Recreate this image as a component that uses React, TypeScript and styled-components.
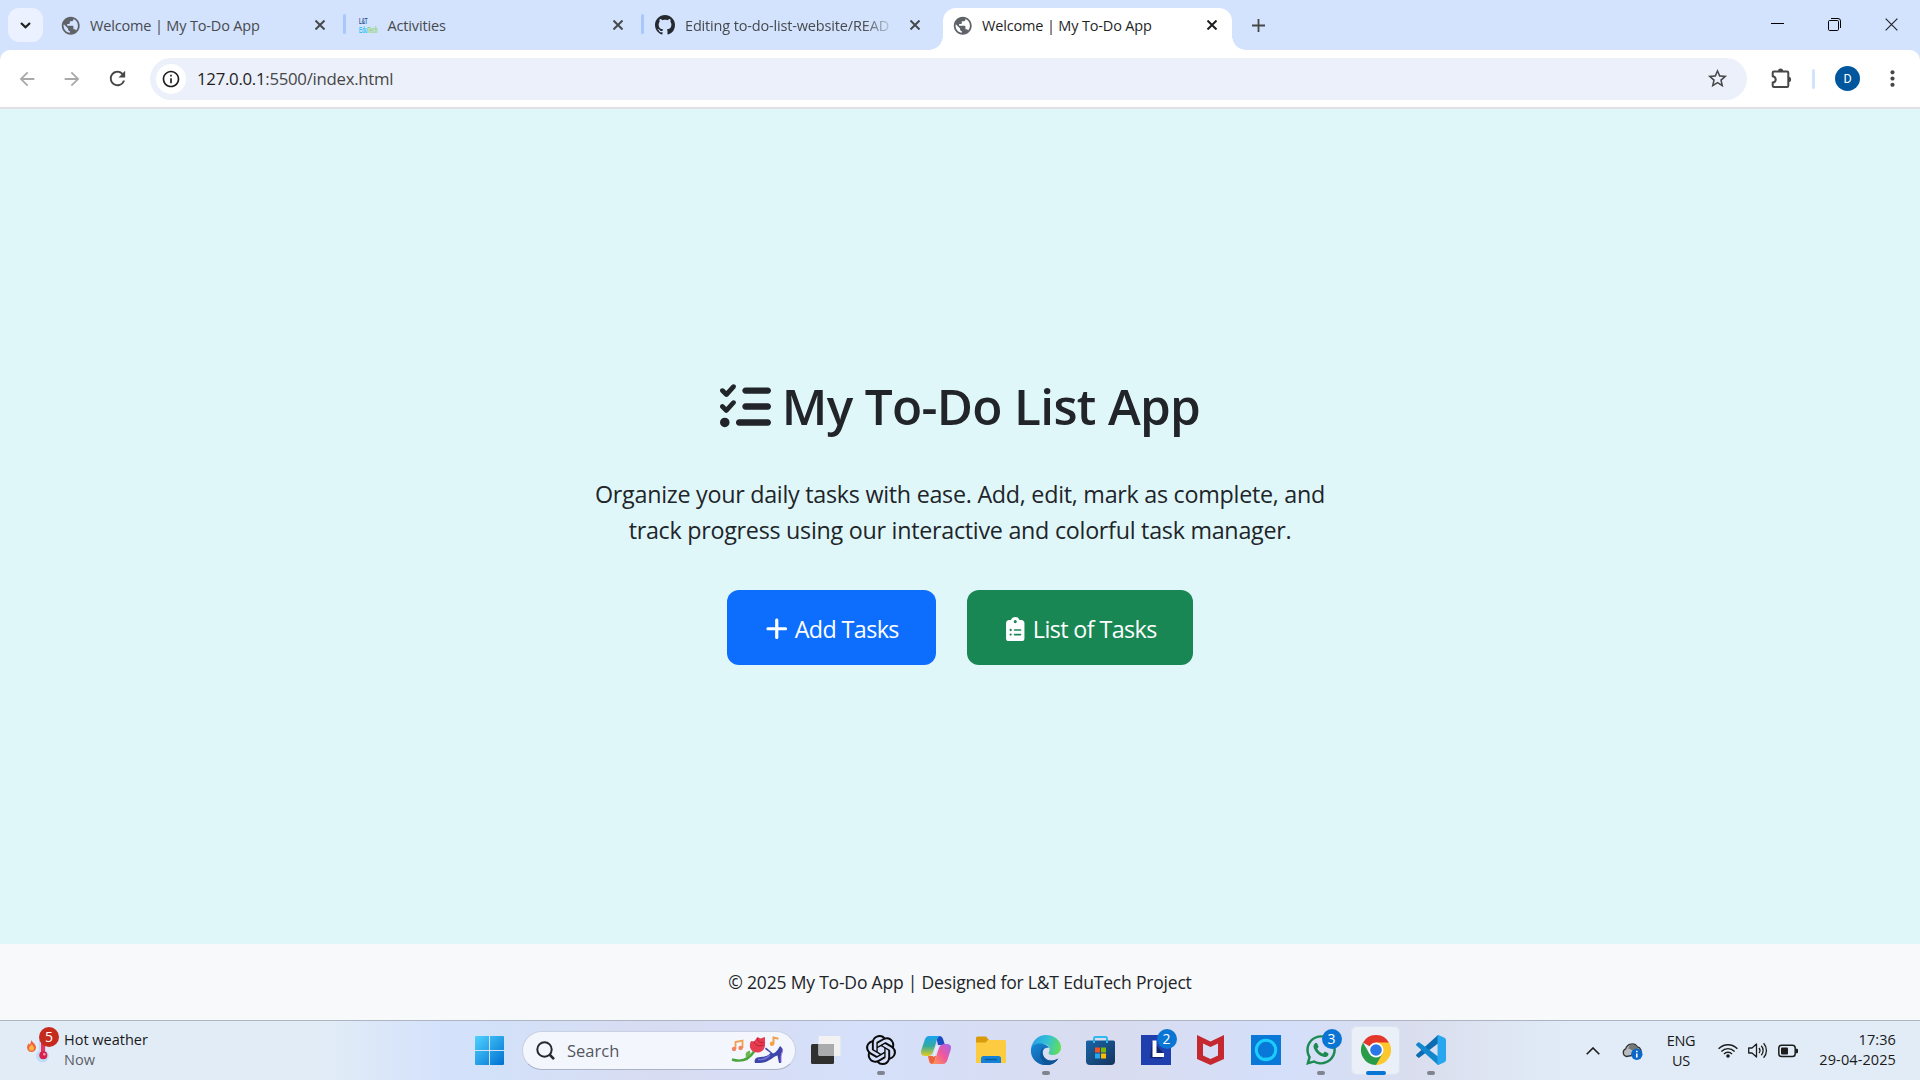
import React from "react";
import styled, { createGlobalStyle } from "styled-components";
import { FaListCheck, FaPlus, FaClipboardList } from "react-icons/fa6";
import { FaWhatsapp } from "react-icons/fa";
import { SiOpenai } from "react-icons/si";
import {
  MdPublic,
  MdArrowBack,
  MdArrowForward,
  MdRefresh,
  MdInfoOutline,
  MdStarOutline,
  MdMoreVert,
} from "react-icons/md";

const GlobalStyle = createGlobalStyle`
  * { box-sizing: border-box; }
  html, body { margin: 0; padding: 0; overflow: hidden; }
  body { font-family: "Open Sans", "Noto Sans", sans-serif; color: #212529; }
  svg { display: block; flex: none; }
`;

const Screen = styled.div`
  width: 1920px;
  height: 1080px;
  display: flex;
  flex-direction: column;
  overflow: hidden;
`;

const Label = styled.span<{ $size: number; $track?: number; $color?: string; $line?: number }>`
  display: block;
  white-space: nowrap;
  font-size: ${(p) => p.$size}px;
  letter-spacing: ${(p) => p.$track ?? 0}px;
  line-height: ${(p) => p.$line ?? 20}px;
  color: ${(p) => p.$color ?? "inherit"};
`;

/* ---------- browser: tab strip ---------- */

const TabStrip = styled.header`
  height: 50px;
  flex: none;
  display: flex;
  background: #d3e2fd;
`;

const TabSearch = styled.button`
  width: 35px;
  height: 34px;
  margin: 8px 4px 0 8px;
  padding: 0;
  border: 0;
  border-radius: 11px;
  background: #ebf1fe;
  display: grid;
  place-items: center;
`;

const Tab = styled.div<{ $active?: boolean; $divider?: boolean }>`
  position: relative;
  width: ${(p) => (p.$active ? 289 : 297.5)}px;
  height: ${(p) => (p.$active ? 42.5 : 50)}px;
  margin: ${(p) => (p.$active ? "7.5px 0 0 3.5px" : "0")};
  padding: ${(p) => (p.$active ? "0 11px 8px 10px" : "0 15.5px 0 14px")};
  border-radius: 13px 13px 0 0;
  background: ${(p) => (p.$active ? "#fff" : "transparent")};
  color: ${(p) => (p.$active ? "#1f1f1f" : "#474a4d")};
  display: flex;
  align-items: center;

  &::after {
    content: "";
    display: ${(p) => (p.$divider ? "block" : "none")};
    position: absolute;
    right: -1.5px;
    top: 14px;
    width: 3px;
    height: 20px;
    border-radius: 2px;
    background: #a8c7fa;
  }
`;

const TabFlare = styled.i<{ $side: "left" | "right" }>`
  position: absolute;
  bottom: 0;
  ${(p) => p.$side}: -14px;
  width: 14px;
  height: 14px;
  background: radial-gradient(
    circle at ${(p) => (p.$side === "left" ? "0 0" : "100% 0")},
    transparent 13.5px,
    #fff 14px
  );
`;

const Favicon = styled.div`
  width: 20px;
  margin: 0 10px 0 -1px;
  display: grid;
  place-items: center;
  height: 20px;
`;

const TabTitle = styled(Label)<{ $fade?: boolean }>`
  flex: 1;
  margin-top: 2px;
  mask-image: ${(p) => (p.$fade ? "linear-gradient(90deg, #000 178px, transparent 211px)" : "none")};
`;

const TabClose = styled.div`
  width: 18px;
  height: 18px;
  margin-left: 9px;
  display: grid;
  place-items: center;
`;

const NewTab = styled.div`
  width: 52px;
  display: grid;
  place-items: center;
`;

const WindowControls = styled.div`
  margin-left: auto;
  padding-right: 22px;
  display: flex;
  align-items: center;
  gap: 44px;
  height: 49px;
`;

/* ---------- browser: toolbar ---------- */

const ToolbarBack = styled.div`
  flex: none;
  background: #d3e2fd;
`;

const Toolbar = styled.div`
  height: 59px;
  background: #fff;
  border-bottom: 2px solid #e1e1e3;
  border-radius: 10px 10px 0 0;
  display: flex;
  align-items: center;
  color: #474747;
`;

const NavButtons = styled.div`
  width: 150px;
  padding-left: 16px;
  display: flex;
  gap: 23px;
  align-items: center;
`;

const Omnibox = styled.div`
  width: 1597px;
  height: 42px;
  border-radius: 21px;
  background: #ecf0fa;
  padding: 0 18px 0 6px;
  display: flex;
  align-items: center;
`;

const SiteInfo = styled.div`
  width: 30px;
  height: 30px;
  border-radius: 50%;
  background: #fff;
  color: #1f1f1f;
  display: grid;
  place-items: center;
  margin-right: 11px;
`;

const Url = styled(Label)`
  flex: 1;
  padding-top: 1px;
  b {
    font-weight: 400;
    color: #1f1f1f;
  }
`;

const ToolbarEnd = styled.div`
  flex: 1;
  padding-left: 24px;
  display: flex;
  align-items: center;
`;

const ToolbarDivider = styled.i`
  width: 3px;
  height: 20px;
  border-radius: 2px;
  background: #d3e2fd;
  margin: 0 20px 0 20px;
`;

const Avatar = styled.div`
  width: 25px;
  height: 25px;
  border-radius: 50%;
  background: #00579d;
  color: #fff;
  font: 12.5px/25px Roboto, sans-serif;
  text-align: center;
  margin-right: 20px;
`;

/* ---------- page ---------- */

const Main = styled.main`
  height: 835px;
  flex: none;
  background: #e0f7fa;
  display: flex;
  flex-direction: column;
  align-items: center;
  padding-top: 267px;
`;

const Title = styled.h1`
  margin: 0;
  height: 60px;
  display: flex;
  align-items: center;
  gap: 11px;
  font-size: 49.5px;
  font-weight: 600;
  letter-spacing: -0.68px;
  line-height: 60px;
  white-space: nowrap;
`;

const Lead = styled.p`
  margin: 40px 0 0;
  text-align: center;
`;

const Actions = styled.div`
  display: flex;
  gap: 31px;
  margin-top: 42px;
`;

const Action = styled.a<{ $color: string; $width: number }>`
  width: ${(p) => p.$width}px;
  height: 75px;
  padding-top: 3px;
  border-radius: 12px;
  background: ${(p) => p.$color};
  color: #fff;
  display: flex;
  align-items: center;
  justify-content: center;
  gap: 5px;
`;

const Footer = styled.footer`
  height: 76px;
  flex: none;
  background: #f8f9fb;
  display: flex;
  justify-content: center;
  align-items: center;
`;

/* ---------- taskbar ---------- */

const Taskbar = styled.div`
  height: 60px;
  flex: none;
  border-top: 1px solid #adb5c1;
  background: linear-gradient(
    90deg,
    #e2ecf6 0,
    #e1ecf7 330px,
    #d3e1fb 450px,
    #d3e1f8 500px,
    #d8dcf2 660px,
    #d5e0fa 860px,
    #d9dcef 1110px,
    #d4dffa 1280px,
    #dadeee 1420px,
    #e1ecf8 1570px,
    #e1ecf7 1920px
  );
  display: flex;
  color: #1a1a1a;
`;

const Weather = styled.div`
  width: 475px;
  padding: 8px 0 0 26px;
  display: flex;
  gap: 5px;
`;

const WeatherText = styled.div`
  padding-top: 1px;
`;

const WeatherIcon = styled.div`
  position: relative;
  width: 33px;
  height: 40px;
`;

const Badge = styled.span<{ $top: number; $right: number; $color: string }>`
  position: absolute;
  top: ${(p) => p.$top}px;
  right: ${(p) => p.$right}px;
  width: 20px;
  height: 20px;
  border-radius: 50%;
  background: ${(p) => p.$color};
  color: #fff;
  font-size: 14px;
  line-height: 20px;
  text-align: center;
`;

const StartButton = styled.div`
  width: 46.5px;
  padding-top: 15px;
`;

const SearchBox = styled.div`
  width: 274px;
  height: 39px;
  margin-top: 10px;
  border-radius: 20px;
  background: #f3f6fd;
  border: 1px solid #c9d0e2;
  border-bottom-color: #aab2c8;
  padding: 0 11px 0 13.5px;
  display: flex;
  align-items: center;
`;

const SearchText = styled(Label)`
  flex: 1;
  margin-left: 12px;
`;

const Apps = styled.div`
  display: flex;
  margin-left: 2.5px;
`;

const AppCell = styled.div<{ $focused?: boolean }>`
  position: relative;
  width: ${(p) => (p.$focused ? 49 : 55)}px;
  height: ${(p) => (p.$focused ? 49 : 59)}px;
  margin: ${(p) => (p.$focused ? "5px 3px 0" : "0")};
  padding-bottom: 1px;
  border-radius: 6px;
  background: ${(p) => (p.$focused ? "#ebeff8" : "transparent")};
  box-shadow: ${(p) => (p.$focused ? "inset 0 0 0 1px #dfe3ee" : "none")};
  display: grid;
  place-items: center;
`;

const Running = styled.i<{ $focused?: boolean }>`
  position: absolute;
  left: 50%;
  bottom: ${(p) => (p.$focused ? 0 : 5)}px;
  width: ${(p) => (p.$focused ? 20 : 8)}px;
  height: 4px;
  border-radius: 2px;
  transform: translateX(-50%);
  background: ${(p) => (p.$focused ? "#0a75d3" : "#80848f")};
`;

const Tray = styled.div`
  margin-left: auto;
  padding-right: 24px;
  display: flex;
  align-items: center;
`;

const Stack = styled.div<{ $align: string; $width: number; $gap?: number; $lift?: number }>`
  width: ${(p) => p.$width}px;
  display: flex;
  flex-direction: column;
  align-items: ${(p) => p.$align};
  margin-left: ${(p) => p.$gap ?? 0}px;
  padding-bottom: ${(p) => p.$lift ?? 0}px;
`;

/* ---------- drawings ---------- */

const Cross = ({ s = 10, w = 2 }: { s?: number; w?: number }) => (
  <svg width={s} height={s} viewBox="0 0 10 10" stroke="currentColor" strokeWidth={w} fill="none">
    <path d="M.5.5l9 9M9.5.5l-9 9" />
  </svg>
);

const GithubMark = () => (
  <svg width="20" height="20" viewBox="0 0 16 16" fill="#24292f">
    <path d="M8 0C3.58 0 0 3.58 0 8c0 3.54 2.29 6.53 5.47 7.59.4.07.55-.17.55-.38 0-.19-.01-.82-.01-1.49-2.01.37-2.53-.49-2.69-.94-.09-.23-.48-.94-.82-1.13-.28-.15-.68-.52-.01-.53.63-.01 1.08.58 1.23.82.72 1.21 1.87.87 2.33.66.07-.52.28-.87.51-1.07-1.78-.2-3.64-.89-3.64-3.95 0-.87.31-1.59.82-2.15-.08-.2-.36-1.02.08-2.12 0 0 .67-.21 2.2.82.64-.18 1.32-.27 2-.27s1.36.09 2 .27c1.53-1.04 2.2-.82 2.2-.82.44 1.1.16 1.92.08 2.12.51.56.82 1.27.82 2.15 0 3.07-1.87 3.75-3.65 3.95.29.25.54.73.54 1.48 0 1.07-.01 1.93-.01 2.2 0 .21.15.46.55.38A8.01 8.01 0 0 0 16 8c0-4.42-3.58-8-8-8z" />
  </svg>
);

const EduTechIcon = () => (
  <svg width="20" height="20" viewBox="0 0 20 20" fontFamily="Liberation Sans" fontWeight="700" overflow="visible">
    <text x="1" y="8.500" fontSize="8.500" fill="#2e5796" textLength="8.500" lengthAdjust="spacingAndGlyphs">L&amp;T</text>
    <text x="1" y="18.300" fontSize="8.500" fill="#35c2f2" textLength="18.500" lengthAdjust="spacingAndGlyphs">Edu<tspan fill="#8fd46c">Tech</tspan></text>
  </svg>
);

const Puzzle = () => (
  <svg width="21" height="21" viewBox="0 0 21 21" fill="none" stroke="#474747" strokeWidth="2" strokeLinejoin="round">
    <path d="M3 3.500h13q1.300 0 1.300 1.300v13q0 1.300-1.300 1.300H3q-1.300 0-1.300-1.300v-3.200q3-.6 3-3.200t-3-3.200V4.800Q1.700 3.500 3 3.500z" />
    <path d="M7 3a2.600 2.600 0 0 1 5.200 0zM17.500 8.800a2.600 2.600 0 0 1 0 5.200z" fill="#474747" stroke="none" />
  </svg>
);

const Thermometer = () => (
  <svg width="33" height="40" viewBox="0 0 33 40">
    <rect x="13" y="6" width="7" height="24" rx="3.5" fill="#bcdcf8" />
    <circle cx="16.5" cy="27" r="6.3" fill="#bcdcf8" />
    <rect x="15" y="12" width="4" height="15" rx="2" fill="#ee3158" />
    <circle cx="17.3" cy="26.3" r="4" fill="#d8204c" />
    <circle cx="18.3" cy="25.3" r="1.2" fill="#ffa1ad" />
    <path d="M5 11c1 2 5 4 5 7.500a4.400 4.400 0 0 1-8.900 0c0-2 1-3 1.700-4.200l1 1.400c.8-1.500 1.400-3 1.200-4.700z" fill="#f0643a" />
    <path d="M5.800 15c.4 1.700 2.200 2.200 2.200 4.200a2.500 2.500 0 0 1-5 0c0-1.700 2-2.500 2.800-4.200z" fill="#ffb545" />
  </svg>
);

const WindowsLogo = () => (
  <svg width="29" height="29" viewBox="0 0 29 29">
    <defs>
      <linearGradient id="win" x1="0" y1="0" x2="1" y2="1">
        <stop offset="0" stopColor="#4fd2ff" />
        <stop offset="1" stopColor="#0070d0" />
      </linearGradient>
    </defs>
    <path fill="url(#win)" d="M1 0h13v14H0V1q0-1 1-1zM15 0h13q1 0 1 1v13H15zM0 15h14v14H1q-1 0-1-1zM15 15h14v13q0 1-1 1H15z" />
  </svg>
);

const Magnifier = () => (
  <svg width="19" height="20" viewBox="0 0 19 20" fill="none" stroke="#252a31">
    <circle cx="8.500" cy="8.500" r="7.200" strokeWidth="2" />
    <path d="M13.500 13.500l4.500 4.700" strokeWidth="2.600" />
  </svg>
);

const SearchArt = () => (
  <svg width="53" height="29" viewBox="0 0 53 29" fill="none">
    <path d="M4.500 13V6l7-1.500V12" stroke="#f2a04e" strokeWidth="1.800" />
    <circle cx="3" cy="13" r="2.200" fill="#f28664" />
    <circle cx="9.600" cy="12" r="2.200" fill="#f28664" />
    <path d="M42.500 8V1.500l5 1.200" stroke="#f2a04e" strokeWidth="2" />
    <circle cx="41" cy="7.700" r="2.200" fill="#f5a044" />
    <path d="M1 23.500c10 3 17 0 22-8" stroke="#4ca43c" strokeWidth="2.400" />
    <path d="M15 21.500c-1-4 0-6 4-7 1 4 0 6-4 7z" fill="#6cb84d" />
    <path d="M20 5l3 .5L26.500 1l3 1.500L34 1v5c.5 5-1 10-7.500 10.500C20 16.500 17 11 20 5z" fill="#e63c50" />
    <path d="M23 5.500c1 3.500 4 5.500 9.500 3.500M26.500 2c0 3 2 5 6 4.500" stroke="#b91f3c" strokeWidth="1" />
    <path d="M35 11.500l7 6c3-1 5-4 7-7.500 3 2 3 5 1 8v9h-2l-1.500-7.500C42 20 39 26.500 29 27h-5q-1.500-3.500 2-5.500c5-.5 11-1 13.500-4.500L34 13z" fill="#3c46a8" />
    <path d="M27 23.500c5 .5 9-1 12-4.500" stroke="#7a72d8" strokeWidth="1.300" />
    <path d="M51.300 12.500c1 3-1 5-1.300 8v6" stroke="#9b6bdc" />
  </svg>
);

const TaskView = () => (
  <svg width="30" height="30" viewBox="0 0 30 30">
    <rect x="0" y="9" width="23" height="20" rx="1.500" fill="#30302f" />
    <rect x="7.500" y="1" width="22" height="20" rx="1.500" fill="#f2f2f2" />
    <path d="M7.500 9H23v12H9q-1.500 0-1.500-1.500z" fill="#a9abac" />
  </svg>
);

const Copilot = () => (
  <svg width="30" height="28" viewBox="0 0 30 28">
    <defs>
      <linearGradient id="cpa" x1="0" y1="0" x2="0" y2="1">
        <stop offset="0" stopColor="#1aa2f0" />
        <stop offset=".5" stopColor="#32aba0" />
        <stop offset="1" stopColor="#e2cc1f" />
      </linearGradient>
      <linearGradient id="cpb" x1="1" y1="0" x2="0" y2="1">
        <stop offset="0" stopColor="#a563f0" />
        <stop offset=".5" stopColor="#f0589a" />
        <stop offset="1" stopColor="#ff9b50" />
      </linearGradient>
    </defs>
    <path d="M15 0h3c3 0 4 2 5 6l1 3h-7z" fill="#1c4ac0" />
    <path d="M8 0h11c-2 1-3 3-4 7l-3 9c-1 3-3 4-6 4H4c-4 0-5-3-3-8L4 3c1-2 2-3 4-3z" fill="url(#cpa)" />
    <path d="M7 20h8c-1 5-2 8-4 8-3 0-3-4-4-8z" fill="#f0643c" />
    <path d="M22 28H11c2-1 3-3 4-7l3-9c1-3 3-4 6-4h2c4 0 5 3 3 8l-3 9c-1 2-2 3-4 3z" fill="url(#cpb)" />
    <path d="M17.500 9.500l-4.200 11-1.500.5 3.500-11z" fill="#e8ecfa" />
  </svg>
);

const Explorer = () => (
  <svg width="30" height="28" viewBox="0 0 30 28">
    <path d="M0 2q0-1.500 1.500-1.500H10l3 3.500v4H0z" fill="#d99a0b" />
    <path d="M12 4h16.500Q30 4 30 5.500V27H0V6.500h9.500z" fill="#fdcb3f" />
    <path d="M5 27v-4.500Q5 20 7.500 20h15q2.500 0 2.500 2.500V27z" fill="#1482d6" />
    <path d="M9 23.500h12" stroke="#0d5a9f" strokeWidth="1.400" />
  </svg>
);

const Edge = () => (
  <svg width="30" height="30" viewBox="0 0 30 30">
    <defs>
      <linearGradient id="edA" x1="0" y1=".2" x2="1" y2=".4">
        <stop offset="0" stopColor="#249de8" />
        <stop offset=".55" stopColor="#34c1d4" />
        <stop offset="1" stopColor="#61dd5c" />
      </linearGradient>
      <linearGradient id="edB" x1="0" y1="0" x2="1" y2="1">
        <stop offset="0" stopColor="#168ad8" />
        <stop offset="1" stopColor="#0c4c94" />
      </linearGradient>
    </defs>
    <path d="M0 14C1 6 7 0 15 0c9 0 15 6 15 12.500 0 5-4 7.500-8 7.500-4 0-5-1.500-4-3 2-4-1-8-6-8-6 0-11 2-12 5z" fill="url(#edA)" />
    <path d="M0 14c1-4 6-6.500 12-5 3 .5 5 2 6 4-4-1-7 2-6 6 1 5 6 8 12 6l3-1.500C24 28 20 30 15 30 6 30-1 23 0 14z" fill="url(#edB)" />
    <path d="M12.500 12c-6 6-3 15 4 18 5 0 8-2.500 11-6.500-7 4-14 2-16-4-.6-2 0-5 1-7.500z" fill="#0e5597" />
  </svg>
);

const Store = () => (
  <svg width="29" height="29" viewBox="0 0 29 29">
    <defs>
      <linearGradient id="st" x1="0" y1="0" x2="1" y2="1">
        <stop offset="0" stopColor="#1865a8" />
        <stop offset="1" stopColor="#15345c" />
      </linearGradient>
    </defs>
    <path d="M8 6V2.500Q8 1 9.500 1h10Q21 1 21 2.500V6" fill="none" stroke="#31b8ee" strokeWidth="2" />
    <path d="M0 6Q0 4.500 1.500 4.500h26Q29 4.500 29 6v19q0 4-4 4H4q-4 0-4-4z" fill="url(#st)" />
    <path d="M9 11.500h5v5H9z" fill="#f25022" />
    <path d="M15 11.500h5v5h-5z" fill="#7fba00" />
    <path d="M9 17.500h5v5H9z" fill="#24a7ee" />
    <path d="M15 17.500h5v5h-5z" fill="#ffb900" />
    <path d="M8 4.500V7M21 4.500V7" stroke="#31b8ee" strokeWidth="2" />
  </svg>
);

const LIcon = () => (
  <svg width="30" height="30" viewBox="0 0 30 30">
    <path d="M0 0h30v30H0z" fill="#1f3fae" />
    <path d="M11 6l-2 17 12 .5 2-5z" fill="#10256f" />
    <path d="M11.500 5.500h4v12.500H23v4H11.500z" fill="#fff" />
  </svg>
);

const McAfee = () => (
  <svg width="27" height="30" viewBox="0 0 27 30">
    <path fillRule="evenodd" d="M0 0l13.500 6.500L27 0v24l-13.500 6L0 24zM6 8.500v12l7.500 3.500 7.500-3.500v-12L13.500 12z" fill="#c5282f" />
  </svg>
);

const Alexa = () => (
  <svg width="30" height="30" viewBox="0 0 30 30">
    <path d="M0 0h30v30H0z" fill="#0a78d6" />
    <circle cx="15" cy="15" r="9.700" fill="none" stroke="#1bcdfd" strokeWidth="3" />
    <path d="M13.500 22c2 1 4 1 7-1l-6 5.500z" fill="#1bcdfd" />
  </svg>
);

const ChromeLogo = () => (
  <svg width="30" height="30" viewBox="0 0 30 30">
    <path d="M15 15L2 7.500A15 15 0 0 1 28 7.500z" fill="#e3372c" />
    <path d="M15 15V7.500h13A15 15 0 0 1 15 30z" fill="#fdc72e" />
    <path d="M15 15L21.500 18.800 15 30A15 15 0 0 1 2 7.500l6.500 11.200z" fill="#2a9b48" />
    <circle cx="15" cy="15" r="7.500" fill="#fff" />
    <circle cx="15" cy="15" r="5.800" fill="#2a78e8" />
  </svg>
);

const VsCode = () => (
  <svg width="30" height="30" viewBox="0 0 30 30">
    <path d="M22 0v8.500L3.500 22.500q-.8.500-1.500 0L.4 21q-.8-.8 0-1.600z" fill="#0b6cb4" />
    <path d="M22 30v-8.500L3.500 7.500Q2.700 7 2 7.500L.4 9q-.8.800 0 1.600z" fill="#1287cd" />
    <path d="M21.500 0q.7-.2 1.500.2l5.500 2.600q1.500.7 1.500 2.200v20q0 1.500-1.500 2.200L23 29.800q-.8.400-1.500.2z" fill="#28a7f0" />
  </svg>
);

const CloudInfo = () => (
  <svg width="21" height="18" viewBox="0 0 21 18">
    <path d="M4.500 14.500a4 4 0 0 1-.8-7.600A6.500 6.500 0 0 1 15.500 5a4.700 4.700 0 0 1 3 7z" fill="#b9bcc0" stroke="#333" strokeWidth="1.300" />
    <path d="M6 6.500q4 .5 7 4.500l4-2-3-5q-3-3-6-1z" fill="#777" />
    <circle cx="14.800" cy="12.200" r="5.700" fill="#0b68c8" />
    <path d="M14.800 11.500v4M14.800 8.800v1.500" stroke="#fff" strokeWidth="1.600" />
  </svg>
);

const Wifi = () => (
  <svg width="20" height="15" viewBox="0 0 20 15" fill="none" stroke="#1c1c1c" strokeWidth="1.400">
    <path d="M.6 5.800a13 13 0 0 1 18.800 0M3.400 8.400a9.300 9.300 0 0 1 13.200 0M6 11a5.600 5.600 0 0 1 8 0" />
    <circle cx="10" cy="13" r="1.800" fill="#1c1c1c" stroke="none" />
  </svg>
);

const Speaker = () => (
  <svg width="20" height="17" viewBox="0 0 20 17" fill="none" stroke="#1c1c1c" strokeWidth="1.300">
    <path d="M.7 6h3.300L8.500 2v13L4 11H.7z" strokeLinejoin="round" />
    <path d="M11 6a4 4 0 0 1 0 5M13.300 3.800a7 7 0 0 1 0 9.400M15.600 1.300a10.500 10.500 0 0 1 0 14.400" />
  </svg>
);

const Battery = () => (
  <svg width="20" height="14" viewBox="0 0 20 14">
    <rect x=".8" y="1.200" width="16.400" height="11.400" rx="2.800" fill="none" stroke="#1c1c1c" strokeWidth="1.500" />
    <rect x="3" y="3.400" width="7" height="7" rx="1" fill="#1c1c1c" />
    <path d="M18 4.700h1q1 0 1 1v2.600q0 1-1 1h-1z" fill="#1c1c1c" />
  </svg>
);

/* ---------- data ---------- */

const tabs = [
  { title: "Welcome | My To-Do App", icon: <MdPublic size={21.5} color="#5f6368" />, divider: true },
  { title: "Activities", icon: <EduTechIcon />, divider: true },
  { title: "Editing to-do-list-website/READ", icon: <GithubMark />, fade: true },
  { title: "Welcome | My To-Do App", icon: <MdPublic size={21.5} color="#5f6368" />, active: true },
];

const apps: { icon: React.ReactNode; badge?: string; running?: boolean; focused?: boolean }[] = [
  { icon: <TaskView /> },
  { icon: <SiOpenai size={30} color="#0b0b0b" />, running: true },
  { icon: <Copilot /> },
  { icon: <Explorer /> },
  { icon: <Edge />, running: true },
  { icon: <Store /> },
  { icon: <LIcon />, badge: "2" },
  { icon: <McAfee /> },
  { icon: <Alexa /> },
  { icon: <FaWhatsapp size={34} color="#1d8a52" />, badge: "3", running: true },
  { icon: <ChromeLogo />, running: true, focused: true },
  { icon: <VsCode />, running: true },
];

export default function App() {
  return (
    <Screen>
      <GlobalStyle />
      <TabStrip>
        <TabSearch>
          <svg width="11" height="7" viewBox="0 0 11 7" fill="none" stroke="#1f1f1f" strokeWidth="2.200">
            <path d="M1 1l4.500 4.300L10 1" />
          </svg>
        </TabSearch>
        {tabs.map((t, i) => (
          <Tab key={i} $active={t.active} $divider={t.divider}>
            {t.active && <TabFlare $side="left" />}
            {t.active && <TabFlare $side="right" />}
            <Favicon>{t.icon}</Favicon>
            <TabTitle $size={14.5} $track={-0.16} $fade={t.fade}>{t.title}</TabTitle>
            <TabClose><Cross /></TabClose>
          </Tab>
        ))}
        <NewTab>
          <svg width="13" height="13" viewBox="0 0 13 13" stroke="#474747" strokeWidth="1.800">
            <path d="M6.500 0v13M0 6.500h13" />
          </svg>
        </NewTab>
        <WindowControls>
          <svg width="13" height="13" viewBox="0 0 13 13" stroke="#000"><path d="M0 5.500h13" /></svg>
          <svg width="13" height="13" viewBox="0 0 13 13" stroke="#000" fill="none">
            <rect x=".5" y="2.500" width="10" height="10" rx="1.200" />
            <path d="M3 .5h7q2.500 0 2.500 2.500v7" />
          </svg>
          <Cross s={13} w={0.9} />
        </WindowControls>
      </TabStrip>

      <ToolbarBack>
        <Toolbar>
          <NavButtons>
            <MdArrowBack size={22} color="#a9a9a9" />
            <MdArrowForward size={22} color="#a9a9a9" />
            <MdRefresh size={23} />
          </NavButtons>
          <Omnibox>
            <SiteInfo><MdInfoOutline size={20} /></SiteInfo>
            <Url $size={16.8} $track={-0.28} $line={24} $color="#474747"><b>127.0.0.1</b>:5500/index.html</Url>
            <MdStarOutline size={23} />
          </Omnibox>
          <ToolbarEnd>
            <Puzzle />
            <ToolbarDivider />
            <Avatar>D</Avatar>
            <MdMoreVert size={25} />
          </ToolbarEnd>
        </Toolbar>
      </ToolbarBack>

      <Main>
        <Title>
          <FaListCheck size={51} />
          My To-Do List App
        </Title>
        <Lead>
          <Label $size={23.3} $track={-0.27} $line={36}>Organize your daily tasks with ease. Add, edit, mark as complete, and</Label>
          <Label $size={23.3} $track={-0.27} $line={36}>track progress using our interactive and colorful task manager.</Label>
        </Lead>
        <Actions>
          <Action $color="#0d6efd" $width={209}>
            <FaPlus size={25.5} />
            <Label $size={23.3} $track={-0.6} $line={36}>Add Tasks</Label>
          </Action>
          <Action $color="#198754" $width={226}>
            <FaClipboardList size={24.5} />
            <Label $size={23.3} $track={-0.6} $line={36}>List of Tasks</Label>
          </Action>
        </Actions>
      </Main>

      <Footer>
        <Label $size={17.5} $track={-0.19} $line={24}>© 2025 My To-Do App | Designed for L&amp;T EduTech Project</Label>
      </Footer>

      <Taskbar>
        <Weather>
          <WeatherIcon>
            <Thermometer />
            <Badge $top={-2} $right={0} $color="#c42b1c">5</Badge>
          </WeatherIcon>
          <WeatherText>
            <Label $size={14.5}>Hot weather</Label>
            <Label $size={14.5} $color="#5c6066">Now</Label>
          </WeatherText>
        </Weather>
        <StartButton><WindowsLogo /></StartButton>
        <SearchBox>
          <Magnifier />
          <SearchText $size={16.5} $color="#54575e">Search</SearchText>
          <SearchArt />
        </SearchBox>
        <Apps>
          {apps.map((a, i) => (
            <AppCell key={i} $focused={a.focused}>
              {a.icon}
              {a.badge && <Badge $top={8} $right={6.5} $color="#0a75d3">{a.badge}</Badge>}
              {a.running && <Running $focused={a.focused} />}
            </AppCell>
          ))}
        </Apps>
        <Tray>
          <svg width="14" height="8" viewBox="0 0 14 8" fill="none" stroke="#1c1c1c" strokeWidth="1.600">
            <path d="M.7 7.300L7 1l6.300 6.300" />
          </svg>
          <Stack $align="center" $width={20} $gap={22.5}><CloudInfo /></Stack>
          <Stack $align="center" $width={40} $gap={18.5}>
            <Label $size={14.5} $track={-0.3}>ENG</Label>
            <Label $size={14.5} $track={-0.3}>US</Label>
          </Stack>
          <Stack $align="center" $width={20} $gap={17}><Wifi /></Stack>
          <Stack $align="center" $width={20} $gap={10}><Speaker /></Stack>
          <Stack $align="center" $width={20} $gap={10}><Battery /></Stack>
          <Stack $align="flex-end" $width={98} $lift={2}>
            <Label $size={14.5} $track={0.1}>17:36</Label>
            <Label $size={14.5} $track={0.1}>29-04-2025</Label>
          </Stack>
        </Tray>
      </Taskbar>
    </Screen>
  );
}
